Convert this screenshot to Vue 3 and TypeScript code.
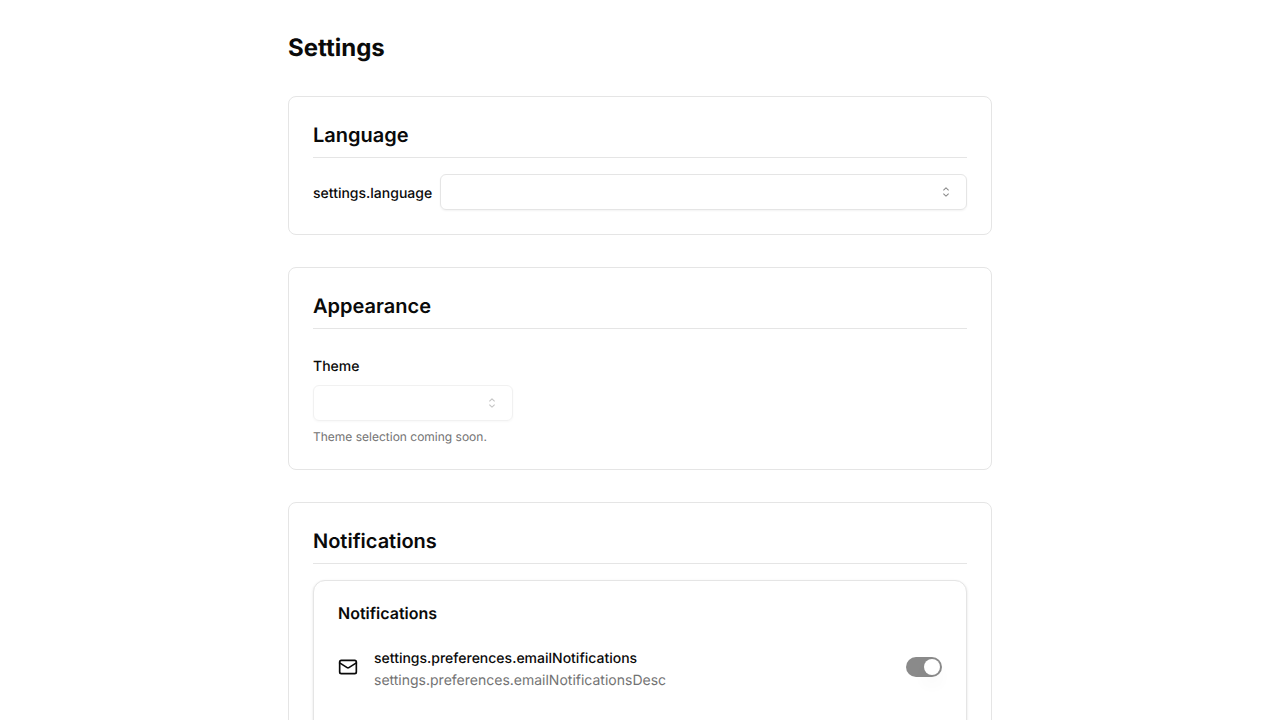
<script setup lang="ts">
import { ref } from 'vue'

interface Preference {
  id: string
  title: string
  description: string
  enabled: boolean
}

const caretSort =
  'M4.93179 5.43179C4.75605 5.60753 4.75605 5.89245 4.93179 6.06819C5.10753 6.24392 5.39245 6.24392 5.56819 6.06819L7.49999 4.13638L9.43179 6.06819C9.60753 6.24392 9.89245 6.24392 10.0682 6.06819C10.2439 5.89245 10.2439 5.60753 10.0682 5.43179L7.81819 3.18179C7.73379 3.0974 7.61933 3.04999 7.49999 3.04999C7.38064 3.04999 7.26618 3.0974 7.18179 3.18179L4.93179 5.43179ZM10.0682 9.56819C10.2439 9.39245 10.2439 9.10753 10.0682 8.93179C9.89245 8.75606 9.60753 8.75606 9.43179 8.93179L7.49999 10.8636L5.56819 8.93179C5.39245 8.75606 5.10753 8.75606 4.93179 8.93179C4.75605 9.10753 4.75605 9.39245 4.93179 9.56819L7.18179 11.8182C7.35753 11.9939 7.64245 11.9939 7.81819 11.8182L10.0682 9.56819Z'

const language = ref('')
const theme = ref('')
const preferences = ref<Preference[]>([
  {
    id: 'email-notifications',
    title: 'settings.preferences.emailNotifications',
    description: 'settings.preferences.emailNotificationsDesc',
    enabled: true,
  },
])
</script>

<template>
  <main class="page">
    <h1 class="page-title">Settings</h1>

    <section class="section">
      <h2 class="section-title">Language</h2>
      <div class="language-row">
        <div><label class="label" for="language">settings.language</label></div>
        <div class="select">
          <select id="language" v-model="language" class="select-control"></select>
          <svg class="select-icon" viewBox="0 0 15 15" aria-hidden="true">
            <path :d="caretSort" fill="currentColor" fill-rule="evenodd" clip-rule="evenodd" />
          </svg>
        </div>
      </div>
    </section>

    <section class="section">
      <h2 class="section-title">Appearance</h2>
      <div class="theme-field">
        <div><label class="label" for="theme">Theme</label></div>
        <div class="select select-theme">
          <select id="theme" v-model="theme" class="select-control" disabled></select>
          <svg class="select-icon" viewBox="0 0 15 15" aria-hidden="true">
            <path :d="caretSort" fill="currentColor" fill-rule="evenodd" clip-rule="evenodd" />
          </svg>
        </div>
        <p class="hint">Theme selection coming soon.</p>
      </div>
    </section>

    <section class="section">
      <h2 class="section-title">Notifications</h2>
      <div class="card">
        <h3 class="card-title">Notifications</h3>
        <div v-for="item in preferences" :key="item.id" class="preference">
          <svg class="mail-icon" viewBox="0 0 24 24" aria-hidden="true">
            <rect width="20" height="16" x="2" y="4" rx="2" />
            <path d="m22 7-8.97 5.7a1.94 1.94 0 0 1-2.06 0L2 7" />
          </svg>
          <div class="preference-text">
            <div><label class="label" :for="item.id">{{ item.title }}</label></div>
            <p class="preference-description">{{ item.description }}</p>
          </div>
          <input :id="item.id" v-model="item.enabled" class="switch" type="checkbox" role="switch" disabled />
        </div>
      </div>
    </section>
  </main>
</template>

<style>
body {
  background: #ffffff;
}
</style>

<style scoped>
.page,
.page * {
  box-sizing: border-box;
}

.page {
  display: flex;
  flex-direction: column;
  gap: 32px;
  max-width: 768px;
  margin: 0 auto;
  padding: 32px;
  color: #0a0a0a;
  font-family: Inter, 'Liberation Sans', sans-serif;
  font-size: 16px;
  line-height: 24px;
  text-rendering: geometricPrecision;
}

h1,
h2,
h3,
p {
  margin: 0;
}

.page-title {
  font-size: 24px;
  font-weight: 700;
  line-height: 32px;
}

.section {
  display: flex;
  flex-direction: column;
  gap: 16px;
  padding: 24px;
  border: 1px solid #e5e5e5;
  border-radius: 8px;
}

.section-title {
  padding-bottom: 8px;
  border-bottom: 1px solid #e5e5e5;
  font-size: 20px;
  font-weight: 600;
  line-height: 28px;
}

.label {
  font-size: 14px;
  font-weight: 500;
  line-height: 14px;
}

.language-row {
  display: flex;
  align-items: center;
  gap: 8px;
}

.select {
  display: grid;
  flex: 1;
  align-items: center;
}

.select-control {
  grid-area: 1 / 1;
  width: 100%;
  height: 36px;
  padding: 8px 12px;
  appearance: none;
  border: 1px solid #e5e5e5;
  border-radius: 6px;
  background: transparent;
  box-shadow: 0 1px 2px rgb(0 0 0 / 5%);
  color: inherit;
  font: inherit;
  font-size: 14px;
}

.select-icon {
  grid-area: 1 / 1;
  justify-self: end;
  width: 16px;
  height: 16px;
  margin-right: 13px;
  opacity: 0.5;
  pointer-events: none;
}

.theme-field {
  display: flex;
  flex-direction: column;
  gap: 8px;
  padding-top: 8px;
}

.select-theme {
  width: 200px;
  opacity: 0.5;
}

.select-theme .select-control {
  opacity: 1;
}

.hint {
  color: #737373;
  font-size: 12px;
  line-height: 16px;
}

.card {
  display: flex;
  flex-direction: column;
  gap: 24px;
  padding: 24px 24px 48px;
  border: 1px solid #e5e5e5;
  border-radius: 12px;
  background: #ffffff;
  box-shadow:
    0 1px 3px rgb(0 0 0 / 10%),
    0 1px 2px -1px rgb(0 0 0 / 10%);
}

.card-title {
  font-size: 16px;
  font-weight: 600;
  line-height: 16px;
}

.preference {
  display: flex;
  align-items: center;
  gap: 16px;
}

.mail-icon {
  flex: none;
  width: 20px;
  height: 20px;
  fill: none;
  stroke: currentColor;
  stroke-width: 2;
  stroke-linecap: round;
  stroke-linejoin: round;
}

.preference-text {
  display: flex;
  flex: 1;
  flex-direction: column;
  gap: 4px;
  min-width: 0;
}

.preference-description {
  color: #737373;
  font-size: 14px;
  line-height: 16px;
}

.switch {
  display: flex;
  flex: none;
  align-items: center;
  width: 36px;
  height: 20px;
  margin: 0;
  padding: 2px;
  appearance: none;
  border-radius: 10px;
  background: #e5e5e5;
  opacity: 0.5;
}

.switch::before {
  width: 16px;
  height: 16px;
  border-radius: 50%;
  background: #ffffff;
  box-shadow:
    0 10px 15px -3px rgb(0 0 0 / 10%),
    0 4px 6px -4px rgb(0 0 0 / 10%);
  content: '';
}

.switch:checked {
  justify-content: flex-end;
  background: #171717;
}
</style>
